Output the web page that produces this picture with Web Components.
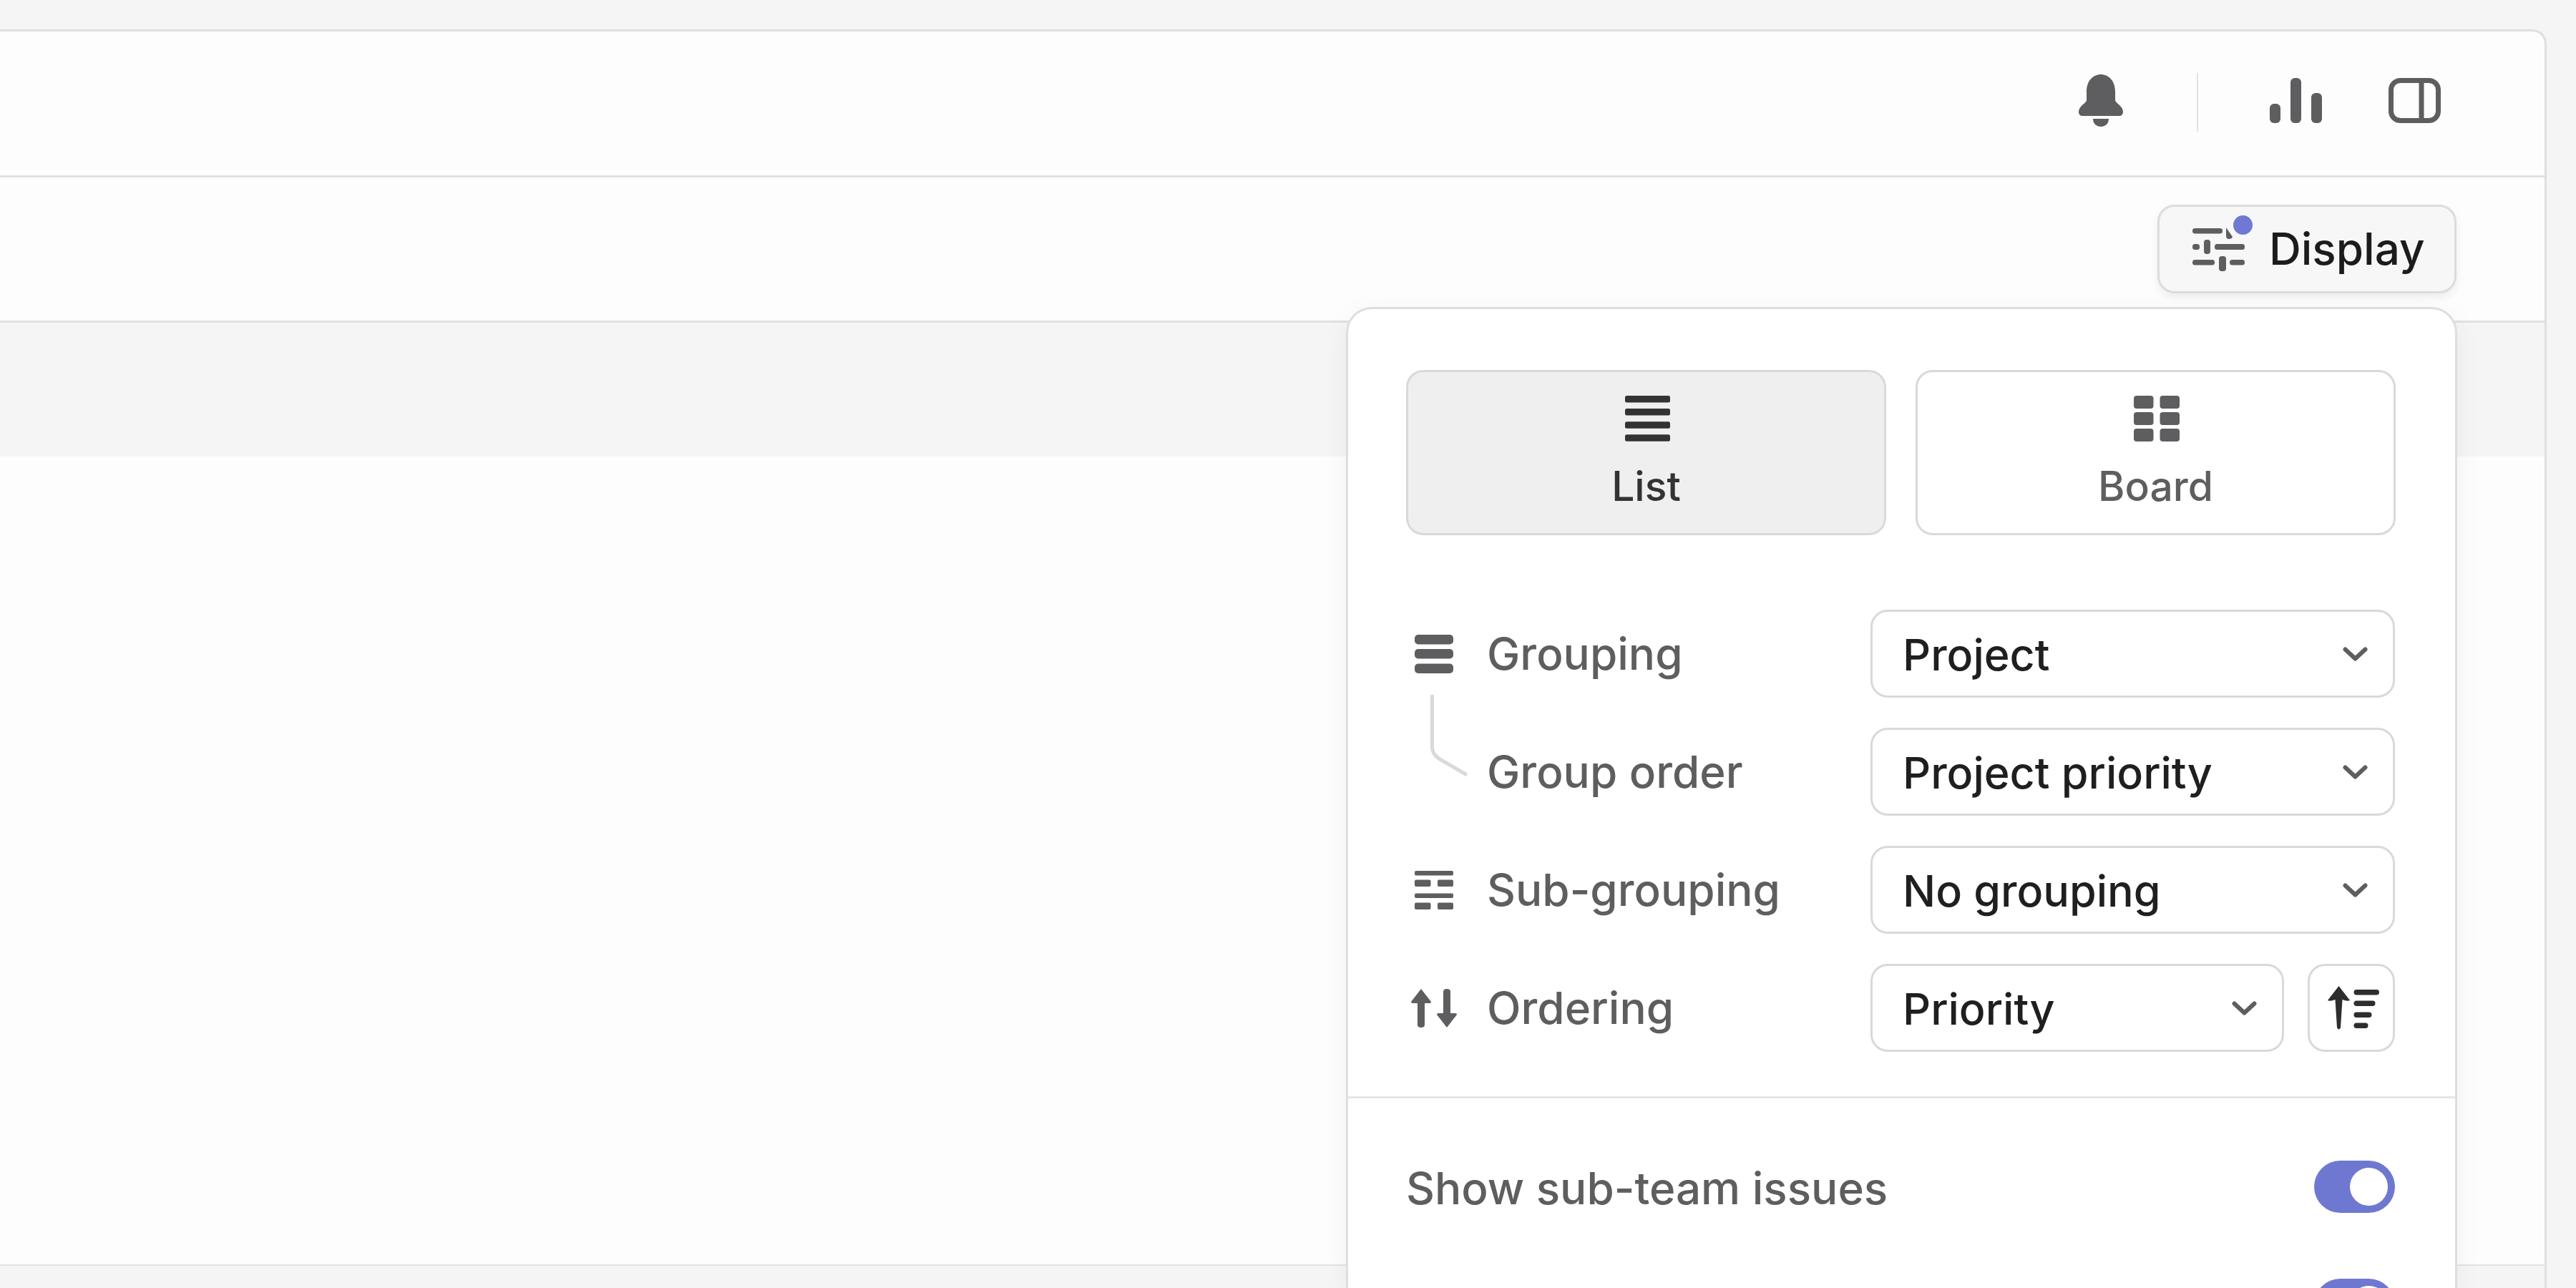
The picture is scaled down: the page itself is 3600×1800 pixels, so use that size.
<!DOCTYPE html>
<html>
<head>
<meta charset="utf-8">
<title>Display options</title>
<style>
  html, body { margin: 0; height: 100%; overflow: hidden; background: #f5f5f5; }
  body { font-family: Inter, "Noto Sans", sans-serif; }
</style>
</head>
<body>
<app-frame>
  <top-bar></top-bar>
  <tool-bar></tool-bar>
  <band-row></band-row>
  <display-popover>
    <view-tile label="List" icon="list" active></view-tile>
    <view-tile label="Board" icon="board"></view-tile>
    <option-row slot="rows" label="Grouping" icon="grouping" value="Project"></option-row>
    <option-row slot="rows" label="Group order" icon="connector" value="Project priority"></option-row>
    <option-row slot="rows" label="Sub-grouping" icon="subgroup" value="No grouping"></option-row>
    <option-row slot="rows" label="Ordering" icon="ordering" value="Priority" sort></option-row>
    <toggle-row slot="toggles" label="Show sub-team issues"></toggle-row>
    <toggle-row slot="toggles"></toggle-row>
  </display-popover>
</app-frame>

<script>
const ICONS = {
  bell: `<svg width="62" height="73" viewBox="0 0 62 73" fill="#5e5e60"><path d="M31 0C42 0 51 9 51 24V36C51 40 62 44 62 52C62 56 60 58 56 58H6C2 58 0 56 0 52C0 44 11 40 11 36V24C11 9 20 0 31 0Z"/><path d="M20 62H42C42 69 37 73 31 73C25 73 20 69 20 62Z"/></svg>`,
  bars: `<svg width="73" height="63" viewBox="0 0 73 63" fill="#5e5e60"><rect y="36" width="15" height="27" rx="6"/><rect x="29" width="15" height="63" rx="6"/><rect x="58" y="21" width="15" height="42" rx="6"/></svg>`,
  panel: `<svg width="73" height="63" viewBox="0 0 73 63" fill="none" stroke="#5e5e60" stroke-width="7"><rect x="3.5" y="3.5" width="66" height="56" rx="13"/><path d="M46 3.5V59.5"/></svg>`,
  sliders: `<svg width="73" height="61" viewBox="0 0 73 61" fill="#5e5e60"><rect y="1" width="42" height="7.5" rx="3.5"/><path d="M47 0L56 13Q55 16 51 16Q47 16 47 12Z"/><rect y="23" width="10" height="8" rx="3.5"/><rect x="16" y="17" width="9" height="20" rx="4"/><rect x="31" y="23" width="42" height="8" rx="3.5"/><rect y="45" width="31" height="7.5" rx="3.5"/><rect x="37" y="40" width="10" height="21" rx="4"/><rect x="52" y="45" width="21" height="7.5" rx="3.5"/></svg>`,
  list: `<svg width="63" height="64" viewBox="0 0 63 64" fill="#333335"><rect width="63" height="9.5" rx="2.5"/><rect y="18" width="63" height="9.5" rx="2.5"/><rect y="36.3" width="63" height="9.5" rx="2.5"/><rect y="54.3" width="63" height="9.5" rx="2.5"/></svg>`,
  board: `<svg width="64" height="64" viewBox="0 0 64 64" fill="#5e5e60"><rect width="27.5" height="18" rx="4"/><rect x="36.5" width="27.5" height="18" rx="4"/><rect y="23" width="27.5" height="18" rx="4"/><rect x="36.5" y="23" width="27.5" height="18" rx="4"/><rect y="46" width="27.5" height="18" rx="4"/><rect x="36.5" y="46" width="27.5" height="18" rx="4"/></svg>`,
  grouping: `<svg width="54" height="54" viewBox="0 0 54 54" fill="#5e5e60"><rect width="54" height="13.5" rx="5"/><rect y="20" width="54" height="13.5" rx="5"/><rect y="40.5" width="54" height="13.5" rx="5"/></svg>`,
  connector: `<svg width="78" height="123" viewBox="0 0 78 123" fill="none" stroke="#d9d9d9" stroke-width="5" style="overflow:visible"><path d="M36.5 -46V27Q36.5 38 49 45L85 66"/></svg>`,
  subgroup: `<svg width="54" height="54" viewBox="0 0 54 54" fill="#5e5e60"><rect width="54" height="6.5" rx="2"/><rect y="12.5" width="22.5" height="9.5" rx="2"/><rect x="32" y="12.5" width="22" height="9.5" rx="2"/><rect y="31.5" width="54" height="6.5" rx="2"/><rect y="44.5" width="22.5" height="9.5" rx="2"/><rect x="32" y="44.5" width="22" height="9.5" rx="2"/></svg>`,
  ordering: `<svg width="64" height="54" viewBox="0 0 64 54" fill="#5e5e60"><path d="M14 0L28 18Q28 20 26 20H19V50Q19 54 14 54Q9 54 9 50V20H2Q0 20 0 18Z"/><path d="M50 54L36 36Q36 34 38 34H45V4Q45 0 50 0Q55 0 55 4V34H62Q64 34 64 36Z"/></svg>`,
  sortAsc: `<svg width="72" height="61" viewBox="0 0 72 61" fill="#2e2e30"><path d="M15.5 0L31 20Q28 22 20.5 19L18 58Q15.5 63 13 58L10.5 19Q3 22 0 20Z"/><rect x="36.5" y="5" width="35.5" height="7.5" rx="3.7"/><rect x="36.5" y="20.5" width="30" height="7.5" rx="3.7"/><rect x="36.5" y="36.5" width="25" height="7.5" rx="3.7"/><rect x="36.5" y="51.5" width="20" height="7.5" rx="3.7"/></svg>`,
  chevron: `<svg width="35" height="20" viewBox="0 0 35 20" fill="none" stroke="#5e5e60" stroke-width="6" stroke-linecap="round" stroke-linejoin="round"><path d="M3.5 3.5L17.5 16.5L31.5 3.5"/></svg>`
}

const define = (name, css, html) => {
  customElements.define(name, class extends HTMLElement {
    connectedCallback () {
      if (this.shadowRoot) return
      this.attachShadow({ mode: 'open' }).innerHTML = `<style>${css}</style>${html(this)}`
    }
  })
}

define('app-frame', `
  :host { display: block; position: relative; height: 1800px; overflow: hidden; }
  .panel {
    box-sizing: border-box;
    height: 1759px;
    margin: 41px 41px 0 -40px;
    background: #fdfdfd;
    border: 3px solid #dfdfdf;
    border-bottom: 0;
    border-top-right-radius: 20px;
    display: flex;
    flex-direction: column;
  }
`, () => `<div class="panel"><slot></slot><div style="flex:1"></div><div style="height:31px;background:#f5f5f5;border-top:2px solid #e4e4e4"></div></div>`)

define('top-bar', `
  :host { display: flex; align-items: center; justify-content: flex-end; box-sizing: border-box;
    height: 204px; padding: 0 145px 3px 0; border-bottom: 3px solid #e0e0e0; }
  svg { display: block; }
  .bell { margin-top: -6px; }
  .rule { width: 2px; height: 82px; background: #e2e2e2; margin: 0 100px 0 103px; }
  .bars { margin-top: -6px; margin-right: 93px; }
  .panel { margin-top: -6px; }
`, () => `
  <span class="bell">${ICONS.bell}</span>
  <span class="rule"></span>
  <span class="bars">${ICONS.bars}</span>
  <span class="panel">${ICONS.panel}</span>
`)

define('tool-bar', `
  :host { display: flex; align-items: center; justify-content: flex-end; box-sizing: border-box;
    height: 203px; padding-right: 123px; border-bottom: 3px solid #e0e0e0; }
  button {
    all: unset; box-sizing: border-box; position: relative; display: flex; align-items: center;
    width: 418px; height: 124px; padding-left: 46px; gap: 34px;
    background: #f7f7f7; border: 3px solid #dcdcdc; border-radius: 24px;
    box-shadow: 0 5px 12px rgba(0,0,0,.07);
    font: 500 62px/1 Inter, sans-serif; color: #1c1c1e;
  }
  svg { display: block; }
  i { position: absolute; left: 103px; top: 12px; width: 27px; height: 27px; border-radius: 50%; background: #6f78d2; }
`, () => `<button>${ICONS.sliders}<span>Display</span><i></i></button>`)

define('band-row', `
  :host { display: block; height: 187px; background: #f5f5f5; }
`, () => ``)

define('display-popover', `
  :host {
    position: absolute; left: 1881px; top: 429px; width: 1553px; height: 1371px; overflow: hidden;
    box-sizing: border-box; background: #fff;
    border: 3px solid #dedede; border-bottom: 0; border-radius: 36px 36px 0 0;
    box-shadow: 0 10px 40px rgba(0,0,0,.05);
  }
  .tiles { display: grid; grid-template-columns: 671px 671px; gap: 41px; padding: 85px 81px 0; }
  .rows { display: flex; flex-direction: column; gap: 42px; padding: 104px 84px 62px 81px; border-bottom: 3px solid #e6e6e6; }
  .toggles { display: flex; flex-direction: column; gap: 42px; padding: 62px 84px 0 81px; }
`, () => `
  <div class="tiles"><slot></slot></div>
  <div class="rows"><slot name="rows"></slot></div>
  <div class="toggles"><slot name="toggles"></slot></div>
`)

define('view-tile', `
  :host {
    display: flex; flex-direction: column; align-items: center; box-sizing: border-box; height: 231px;
    padding-top: 33px; gap: 31px; border: 3px solid #d9d9d9; border-radius: 24px; background: #fff;
    font: 500 57px/64px Inter, sans-serif; color: #5e5e60;
  }
  :host([active]) { background: #efefef; color: #333335; }
  svg { display: block; margin-left: 3px; }
`, el => `${ICONS[el.getAttribute('icon')]}<span>${el.getAttribute('label')}</span>`)

define('option-row', `
  :host { display: flex; align-items: center; height: 123px; font: 500 62px/1 Inter, sans-serif; color: #5e5e60; }
  .icon { width: 78px; height: 123px; flex: none; display: flex; align-items: center; justify-content: center; margin-right: 35px; }
  .label { flex: 1; }
  svg { display: block; }
  .select {
    box-sizing: border-box; height: 123px; flex: none; width: 733px; display: flex; align-items: center;
    justify-content: space-between; padding: 0 35px 0 42px;
    border: 3px solid #d9d9d9; border-radius: 24px; color: #1f1f21; font-size: 61px; font-weight: 450;
  }
  .select > span { position: relative; top: 2px; }
  :host([sort]) .select { width: 578px; }
  .sort {
    box-sizing: border-box; width: 122px; height: 123px; margin-left: 33px; padding-left: 5px; flex: none;
    display: flex; align-items: center; justify-content: center;
    border: 3px solid #d9d9d9; border-radius: 24px;
  }
`, el => `
  <span class="icon">${ICONS[el.getAttribute('icon')]}</span>
  <span class="label">${el.getAttribute('label')}</span>
  <span class="select"><span>${el.getAttribute('value')}</span>${ICONS.chevron}</span>
  ${el.hasAttribute('sort') ? `<span class="sort">${ICONS.sortAsc}</span>` : ''}
`)

define('toggle-row', `
  :host { display: flex; align-items: center; justify-content: space-between; height: 123px;
    font: 500 62px/1 Inter, sans-serif; color: #5e5e60; }
  .label { position: relative; top: 2px; }
  .track { position: relative; width: 113px; height: 73px; border-radius: 37px; background: #6f78d0; }
  .track i { position: absolute; right: 10px; top: 10px; width: 53px; height: 53px; border-radius: 50%; background: #fff; }
`, el => `<span class="label">${el.getAttribute('label') || ''}</span><span class="track"><i></i></span>`)
</script>
</body>
</html>
